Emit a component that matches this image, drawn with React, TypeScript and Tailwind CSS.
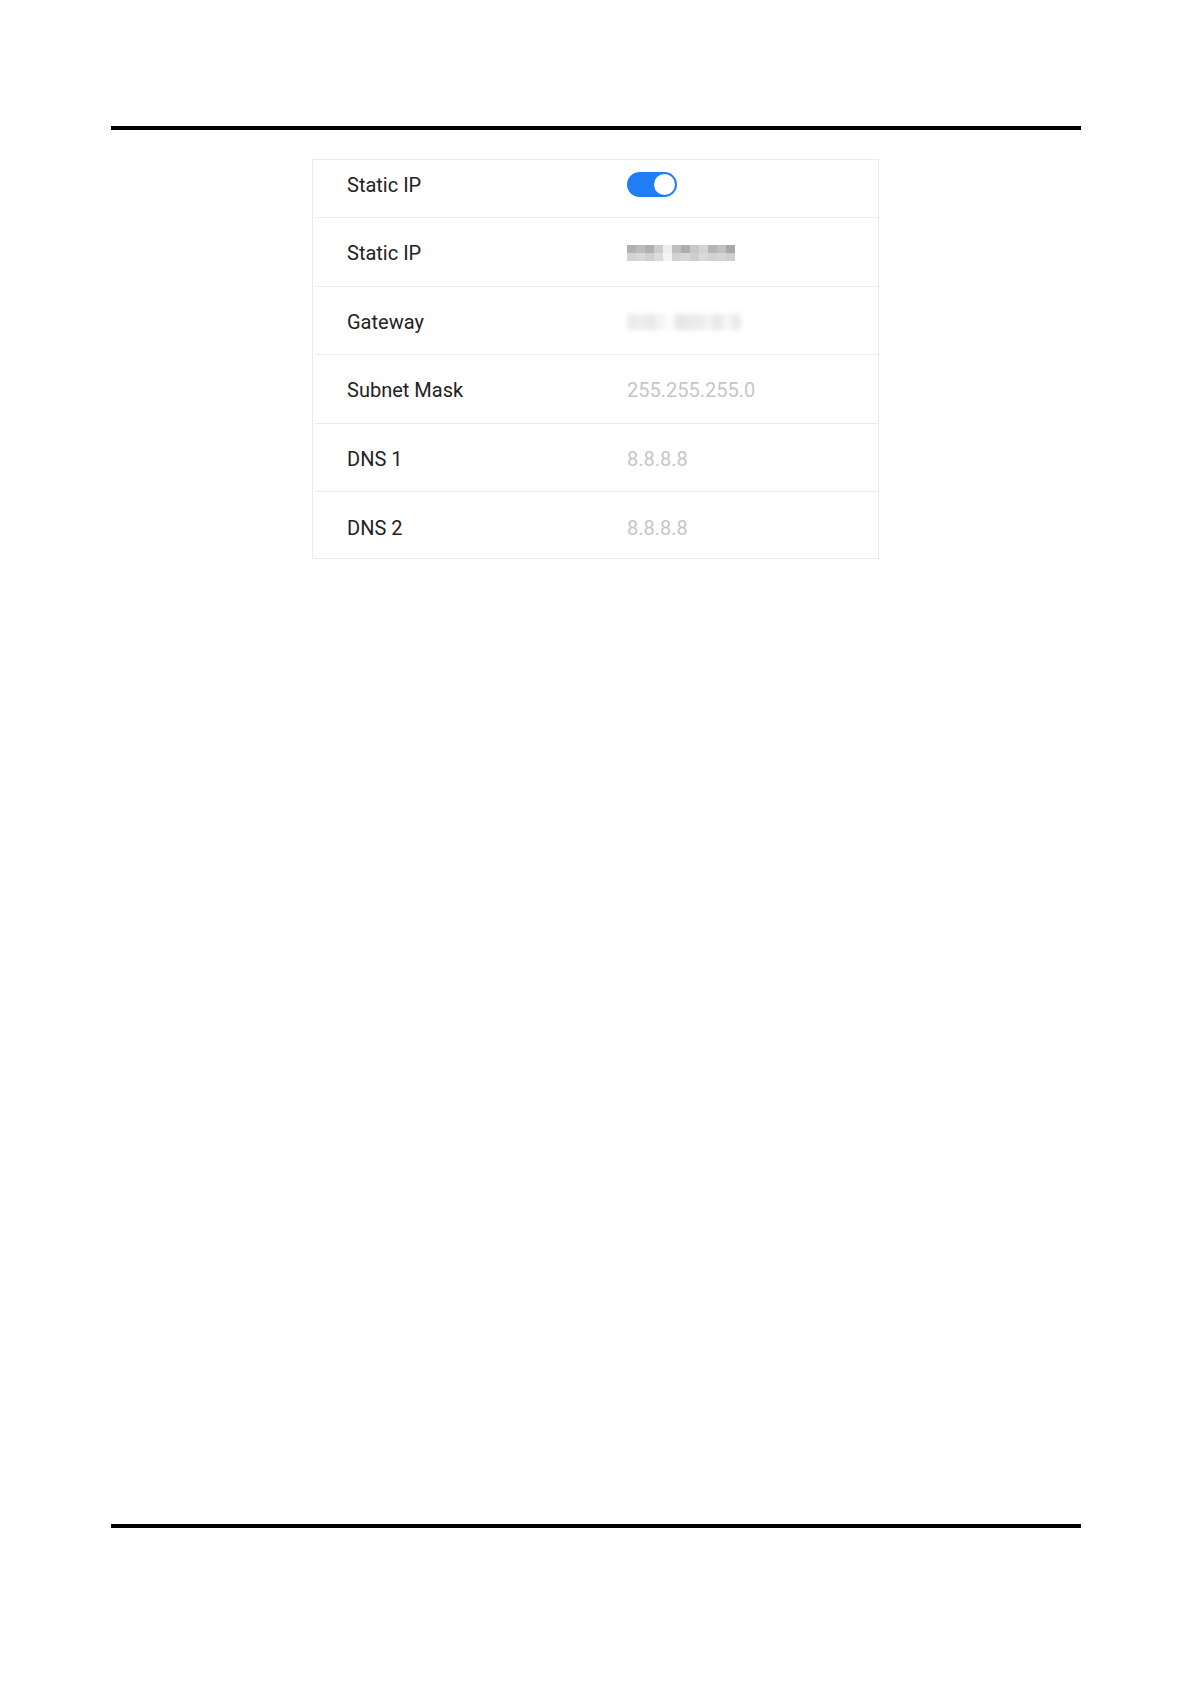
const ipBlocks = [
  ["#b1b1b1", "#bbbbbb", "#afafaf", "#cccccc", "#eeeeee", "#bfbfbf", "#aeaeae", "#c8c8c8", "#d4d4d4", "#b5b5b5", "#c0c0c0", "#a8a8a8"],
  ["#d3d3d3", "#d8d8d8", "#cfcfcf", "#dbdbdb", "#f3f3f3", "#d2d2d2", "#d7d7d7", "#cdcdcd", "#d9d9d9", "#d2d2d2", "#d5d5d5", "#cfcfcf"],
];

const gatewayBlocks = ["#ebebeb", "#efefef", "#e8e8e8", "#f4f4f4", "#fcfcfc", "#e5e5e5", "#e9e9e9", "#ececec", "#f2f2f2", "#e8e8e8", "#f5f5f5", "#eaeaea"];

function Pixelated() {
  return (
    <div className="flex flex-col">
      {ipBlocks.map((row, i) => (
        <div key={i} className="flex">
          {row.map((c, j) => (
            <div key={j} className="w-[9px] h-[8px]" style={{ backgroundColor: c }} />
          ))}
        </div>
      ))}
    </div>
  );
}

function Blurred() {
  return (
    <div className="flex blur-[2.5px]">
      {gatewayBlocks.map((c, j) => (
        <div key={j} className="w-[9.5px] h-[16px]" style={{ backgroundColor: c }} />
      ))}
    </div>
  );
}

function Row({ label, children, last }: { label: string; children: React.ReactNode; last?: boolean }) {
  return (
    <div className={`flex items-center ${last ? "h-[66px] pt-[6px]" : "h-[68.5px] pt-[3px] border-b border-[#ececec] ml-[2px]"}`}>
      <div className={`${last ? "w-[314px] pl-[34px]" : "w-[312px] pl-[32px]"} shrink-0 text-[20px] text-[#222222]`}>{label}</div>
      <div className="text-[20px] text-[#c6c6c6]">{children}</div>
    </div>
  );
}

export default function App() {
  return (
    <div className="min-h-[1684px] bg-white flex flex-col font-['Roboto','Liberation_Sans',sans-serif]">
      <div className="w-[970px] mx-auto mt-[126px] h-[4px] bg-black" />

      <div className="w-[567px] mx-auto mt-[29px] border border-[#ececec]">
        <div className="flex items-center h-[58px] pb-[8px] border-b border-[#ececec] ml-[2px]">
          <div className="w-[312px] pl-[32px] shrink-0 text-[20px] text-[#222222]">Static IP</div>
          <div className="w-[50px] h-[25px] rounded-full bg-[#1f7ef6] p-[2px] flex justify-end">
            <div className="w-[21px] h-[21px] rounded-full bg-white" />
          </div>
        </div>
        <Row label="Static IP">
          <Pixelated />
        </Row>
        <Row label="Gateway">
          <Blurred />
        </Row>
        <Row label="Subnet Mask">255.255.255.0</Row>
        <Row label="DNS 1">8.8.8.8</Row>
        <Row label="DNS 2" last>
          8.8.8.8
        </Row>
      </div>

      <div className="w-[970px] mx-auto mt-auto mb-[156px] h-[4px] bg-black" />
    </div>
  );
}
